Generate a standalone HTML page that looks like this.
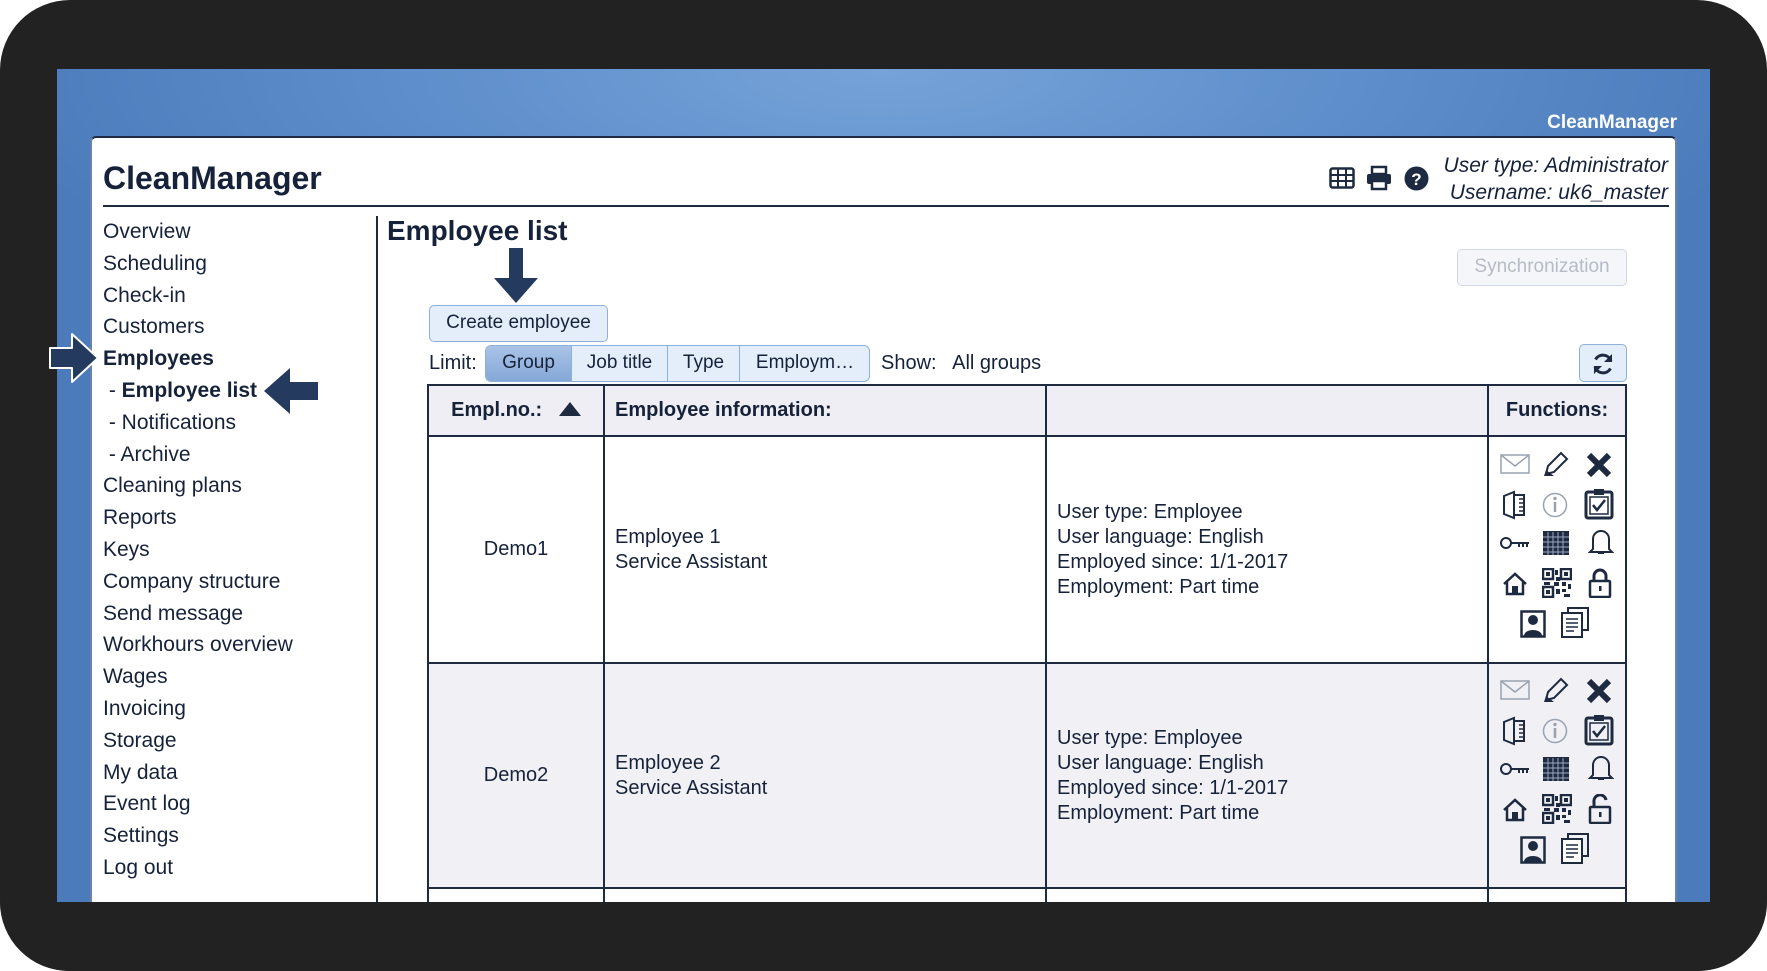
<!DOCTYPE html>
<html><head><meta charset="utf-8"><style>
*{margin:0;padding:0;box-sizing:border-box}
body{width:1767px;height:971px;overflow:hidden;background:#fff;font-family:"Liberation Sans",Arial,sans-serif;color:#16223a;position:relative}
.frame{position:absolute;left:0;top:0;width:1767px;height:971px;background:#222;border-radius:70px}
.blue{position:absolute;left:57px;top:69px;width:1653px;height:833px;background:radial-gradient(ellipse 900px 300px at 50% 0%,#76a3d8 0%,#5f8fcc 50%,#4b7bba 100%)}
.brand{position:absolute;right:90px;top:112px;color:#fff;font-weight:bold;font-size:19px}
.panel{position:absolute;left:90px;top:136px;width:1587px;height:766px;background:#fff;border-top:2px solid #1f2b44;border-left:2px solid #6b83a6;border-right:2px solid #6b83a6;border-radius:6px 6px 0 0}
.a{position:absolute;white-space:nowrap}
.nav{font-size:21px;left:103px}
.btn{position:absolute;border:1.5px solid #8fb0da;background:#e3eefa;border-radius:5px;font-size:19px;text-align:center}
table{position:absolute;left:427px;top:384px;width:1200px;border-collapse:collapse;font-size:20px}
td{border:2px solid #1e2a40;vertical-align:middle}
.fi svg{position:absolute}
</style></head><body>
<div class="frame"></div>
<div class="blue"></div>
<div class="brand">CleanManager</div>
<div class="panel"></div>
<div class="a" style="left:103px;top:160px;font-size:32px;font-weight:bold">CleanManager</div>
<div class="a" style="left:103px;top:205px;width:1566px;height:2px;background:#1e2a40"></div>
<!-- header icons -->
<svg class="a" style="left:1329px;top:167px" width="26" height="22" viewBox="0 0 26 22"><rect x="1.5" y="1.5" width="23" height="19" rx="2" fill="none" stroke="#1e2a40" stroke-width="2.5"/><path d="M1 8H25M1 14H25M9 2V20M17 2V20" stroke="#1e2a40" stroke-width="2"/></svg>
<svg class="a" style="left:1366px;top:165px" width="26" height="26" viewBox="0 0 26 26"><rect x="6" y="2" width="14" height="7" fill="none" stroke="#1e2a40" stroke-width="2.5"/><rect x="1" y="9" width="24" height="10" rx="2" fill="#1e2a40"/><rect x="6" y="16" width="14" height="8" fill="#fff" stroke="#1e2a40" stroke-width="2.5"/></svg>
<svg class="a" style="left:1404px;top:166px" width="25" height="25" viewBox="0 0 25 25"><circle cx="12.5" cy="12.5" r="12" fill="#1e2a40"/><text x="12.5" y="19" text-anchor="middle" font-family="Liberation Sans" font-weight="bold" font-size="17" fill="#fff">?</text></svg>
<div class="a" style="right:99px;top:152px;font-size:21px;font-style:italic;text-align:right;line-height:27px">User type: Administrator<br>Username: uk6_master</div>
<!-- sidebar -->
<div class="a" style="left:376px;top:216px;width:2px;height:686px;background:#1e2a40"></div>
<div class="a nav" style="top:216px;line-height:31.8px">Overview<br>Scheduling<br>Check-in<br>Customers<br><b>Employees</b><br>&nbsp;- <b>Employee list</b><br>&nbsp;- Notifications<br>&nbsp;- Archive<br>Cleaning plans<br>Reports<br>Keys<br>Company structure<br>Send message<br>Workhours overview<br>Wages<br>Invoicing<br>Storage<br>My data<br>Event log<br>Settings<br>Log out</div>
<svg class="a" style="left:48px;top:332px" width="54" height="52" viewBox="0 0 54 52"><path d="M2 16H24V2L50 26L24 50V36H2Z" fill="#243a5e" stroke="#fff" stroke-width="2" stroke-linejoin="round"/></svg>
<svg class="a" style="left:262px;top:366px" width="58" height="50" viewBox="0 0 58 50"><path d="M56 16H28V2L2 25L28 48V34H56Z" fill="#243a5e"/></svg>
<!-- main -->
<div class="a" style="left:387px;top:215px;font-size:28px;font-weight:bold">Employee list</div>
<svg class="a" style="left:493px;top:248px" width="46" height="56" viewBox="0 0 46 56"><path d="M16 0H30V30H45L23 55L1 30H16Z" fill="#243a5e"/></svg>
<div class="btn" style="left:429px;top:305px;width:179px;height:37px;line-height:33px">Create employee</div>
<div class="btn" style="left:1457px;top:249px;width:170px;height:37px;line-height:33px;color:#b6bcc6;background:#f4f6f9;border-color:#d0d8e4">Synchronization</div>
<div class="a" style="left:429px;top:352px;font-size:20px">Limit:</div>
<div class="a" style="left:485px;top:345px;width:385px;height:37px;border:1.5px solid #8fb0da;border-radius:6px;background:#e3eefa;overflow:hidden;font-size:19px">
<div class="a" style="left:0;top:0;width:85px;height:35px;background:linear-gradient(#a9c3e6,#86a8d8);text-align:center;line-height:34px">Group</div>
<div class="a" style="left:85px;top:0;width:96px;height:35px;border-left:1.5px solid #8fb0da;text-align:center;line-height:34px">Job title</div>
<div class="a" style="left:181px;top:0;width:72px;height:35px;border-left:1.5px solid #8fb0da;text-align:center;line-height:34px">Type</div>
<div class="a" style="left:253px;top:0;width:131px;height:35px;border-left:1.5px solid #8fb0da;text-align:center;line-height:34px">Employm…</div>
</div>
<div class="a" style="left:881px;top:352px;font-size:20px">Show:&nbsp;&nbsp; All groups</div>
<div class="btn" style="left:1579px;top:344px;width:48px;height:38px"><svg style="margin-top:7px" width="24" height="24" viewBox="0 0 24 24"><path d="M20 9A8.5 8.5 0 0 0 4.5 7.5M4 15A8.5 8.5 0 0 0 19.5 16.5" fill="none" stroke="#1e2a40" stroke-width="3"/><path d="M21 2V10H13Z M3 22V14H11Z" fill="#1e2a40"/></svg></div>
<table>
<tr style="height:51px;background:#eeeef4;font-weight:bold"><td style="width:176px;text-align:center">Empl.no.:&nbsp;&nbsp; <svg width="22" height="14" viewBox="0 0 22 14"><path d="M0 14L11 0L22 14Z" fill="#1e2a40"/></svg></td><td style="width:442px;padding-left:10px">Employee information:</td><td style="width:442px"></td><td style="text-align:center">Functions:</td></tr>
<tr style="height:227px"><td style="text-align:center">Demo1</td><td style="padding-left:10px;line-height:25px">Employee 1<br>Service Assistant</td><td style="padding-left:10px;line-height:25px">User type: Employee<br>User language: English<br>Employed since: 1/1-2017<br>Employment: Part time</td><td></td></tr>
<tr style="height:225px;background:#f0f0f5"><td style="text-align:center">Demo2</td><td style="padding-left:10px;line-height:25px">Employee 2<br>Service Assistant</td><td style="padding-left:10px;line-height:25px">User type: Employee<br>User language: English<br>Employed since: 1/1-2017<br>Employment: Part time</td><td></td></tr>
<tr style="height:40px"><td></td><td></td><td></td><td></td></tr>
</table>
<div class="a" style="left:0;top:902px;width:1767px;height:69px;background:#222;border-radius:0 0 70px 70px"></div>
<!-- function icons -->
<div class="a fi" style="left:1500px;top:450px">
<svg style="left:0;top:4px" width="30" height="20" viewBox="0 0 30 20"><rect x="1" y="1" width="28" height="18" fill="none" stroke="#9aa2b0" stroke-width="1.5"/><path d="M1 1L15 12L29 1" fill="none" stroke="#9aa2b0" stroke-width="1.5"/></svg>
<svg style="left:42px;top:0" width="28" height="28" viewBox="0 0 28 28"><path d="M4 24L6 16L19 3L25 9L12 22Z" fill="none" stroke="#1e2a40" stroke-width="2"/><path d="M2 26H12L4 20Z" fill="#1e2a40"/></svg>
<svg style="left:86px;top:2px" width="26" height="26" viewBox="0 0 26 26"><path d="M3 3L23 23M23 3L3 23" stroke="#1e2a40" stroke-width="6"/></svg>
<svg style="left:2px;top:40px" width="26" height="30" viewBox="0 0 26 30"><path d="M2 6L12 2V28L2 24Z M12 5H22V25H12" fill="none" stroke="#1e2a40" stroke-width="2"/><path d="M17 9H21M17 13H21M17 17H21M17 21H21" stroke="#1e2a40" stroke-width="1.5"/></svg>
<svg style="left:42px;top:42px" width="26" height="26" viewBox="0 0 26 26"><circle cx="13" cy="13" r="11.5" fill="none" stroke="#9aa2b0" stroke-width="1.5"/><path d="M13 10V20" stroke="#9aa2b0" stroke-width="2.5"/><circle cx="13" cy="6.5" r="1.7" fill="#9aa2b0"/></svg>
<svg style="left:84px;top:38px" width="30" height="32" viewBox="0 0 30 32"><rect x="2" y="4" width="26" height="26" rx="2" fill="none" stroke="#1e2a40" stroke-width="3"/><rect x="6" y="9" width="18" height="17" fill="none" stroke="#1e2a40" stroke-width="1.5"/><rect x="10" y="1" width="10" height="6" fill="#1e2a40"/><path d="M9 17L13 22L21 12" fill="none" stroke="#1e2a40" stroke-width="2.5"/></svg>
<svg style="left:0;top:86px" width="30" height="14" viewBox="0 0 30 14"><circle cx="6" cy="7" r="5" fill="none" stroke="#1e2a40" stroke-width="2"/><path d="M11 7H29M19 7V11M23 7V11M27 7V11" stroke="#1e2a40" stroke-width="2"/></svg>
<svg style="left:42px;top:80px" width="28" height="26" viewBox="0 0 28 26"><rect x="1" y="1" width="26" height="24" fill="#1e2a40"/><path d="M1 7H27M1 12H27M1 17H27M1 22H27M6 2V25M11 2V25M16 2V25M21 2V25" stroke="#9aa8c0" stroke-width="1"/></svg>
<svg style="left:88px;top:78px" width="26" height="28" viewBox="0 0 26 28"><path d="M5 21V11A8 8 0 0 1 21 11V21L24 24H2Z" fill="none" stroke="#1e2a40" stroke-width="2"/><path d="M10 25H16" stroke="#1e2a40" stroke-width="2"/></svg>
<svg style="left:2px;top:122px" width="26" height="24" viewBox="0 0 26 24"><path d="M2 12L13 2L24 12M5 10V22H21V10" fill="none" stroke="#1e2a40" stroke-width="2.5"/><rect x="10" y="14" width="6" height="8" fill="#1e2a40"/></svg>
<svg style="left:42px;top:118px" width="30" height="30" viewBox="0 0 30 30" fill="#1e2a40"><path d="M1 1H11V11H1ZM19 1H29V11H19ZM1 19H11V29H1Z" fill="none" stroke="#1e2a40" stroke-width="2.5"/><rect x="4" y="4" width="4" height="4"/><rect x="22" y="4" width="4" height="4"/><rect x="4" y="22" width="4" height="4"/><rect x="13" y="2" width="3" height="5"/><rect x="14" y="9" width="4" height="4"/><rect x="2" y="14" width="6" height="3"/><rect x="12" y="14" width="5" height="4"/><rect x="20" y="14" width="4" height="4"/><rect x="26" y="16" width="3" height="5"/><rect x="14" y="21" width="4" height="5"/><rect x="20" y="21" width="4" height="3"/><rect x="22" y="26" width="6" height="3"/></svg>
<svg style="left:88px;top:118px" width="24" height="30" viewBox="0 0 24 30"><path d="M6 13V8A6 6 0 0 1 18 8V13" fill="none" stroke="#1e2a40" stroke-width="3"/><rect x="2" y="13" width="20" height="16" rx="1" fill="none" stroke="#1e2a40" stroke-width="2.5"/><rect x="11" y="18" width="2.5" height="5" fill="#1e2a40"/></svg>
<svg style="left:20px;top:160px" width="26" height="28" viewBox="0 0 26 28"><rect x="1.5" y="1.5" width="23" height="25" fill="none" stroke="#1e2a40" stroke-width="2.5"/><circle cx="13" cy="10" r="5" fill="#1e2a40"/><path d="M4 26C4 18 22 18 22 26Z" fill="#1e2a40"/></svg>
<svg style="left:60px;top:156px" width="30" height="32" viewBox="0 0 30 32"><path d="M8 6V2H28V24H22" fill="none" stroke="#1e2a40" stroke-width="2"/><rect x="2" y="7" width="20" height="24" fill="#fff" stroke="#1e2a40" stroke-width="2"/><path d="M6 13H18M6 17H18M6 21H18M6 25H14" stroke="#1e2a40" stroke-width="1.6"/></svg>
</div>
<div class="a fi" style="left:1500px;top:676px">
<svg style="left:0;top:4px" width="30" height="20" viewBox="0 0 30 20"><rect x="1" y="1" width="28" height="18" fill="none" stroke="#9aa2b0" stroke-width="1.5"/><path d="M1 1L15 12L29 1" fill="none" stroke="#9aa2b0" stroke-width="1.5"/></svg>
<svg style="left:42px;top:0" width="28" height="28" viewBox="0 0 28 28"><path d="M4 24L6 16L19 3L25 9L12 22Z" fill="none" stroke="#1e2a40" stroke-width="2"/><path d="M2 26H12L4 20Z" fill="#1e2a40"/></svg>
<svg style="left:86px;top:2px" width="26" height="26" viewBox="0 0 26 26"><path d="M3 3L23 23M23 3L3 23" stroke="#1e2a40" stroke-width="6"/></svg>
<svg style="left:2px;top:40px" width="26" height="30" viewBox="0 0 26 30"><path d="M2 6L12 2V28L2 24Z M12 5H22V25H12" fill="none" stroke="#1e2a40" stroke-width="2"/><path d="M17 9H21M17 13H21M17 17H21M17 21H21" stroke="#1e2a40" stroke-width="1.5"/></svg>
<svg style="left:42px;top:42px" width="26" height="26" viewBox="0 0 26 26"><circle cx="13" cy="13" r="11.5" fill="none" stroke="#9aa2b0" stroke-width="1.5"/><path d="M13 10V20" stroke="#9aa2b0" stroke-width="2.5"/><circle cx="13" cy="6.5" r="1.7" fill="#9aa2b0"/></svg>
<svg style="left:84px;top:38px" width="30" height="32" viewBox="0 0 30 32"><rect x="2" y="4" width="26" height="26" rx="2" fill="none" stroke="#1e2a40" stroke-width="3"/><rect x="6" y="9" width="18" height="17" fill="none" stroke="#1e2a40" stroke-width="1.5"/><rect x="10" y="1" width="10" height="6" fill="#1e2a40"/><path d="M9 17L13 22L21 12" fill="none" stroke="#1e2a40" stroke-width="2.5"/></svg>
<svg style="left:0;top:86px" width="30" height="14" viewBox="0 0 30 14"><circle cx="6" cy="7" r="5" fill="none" stroke="#1e2a40" stroke-width="2"/><path d="M11 7H29M19 7V11M23 7V11M27 7V11" stroke="#1e2a40" stroke-width="2"/></svg>
<svg style="left:42px;top:80px" width="28" height="26" viewBox="0 0 28 26"><rect x="1" y="1" width="26" height="24" fill="#1e2a40"/><path d="M1 7H27M1 12H27M1 17H27M1 22H27M6 2V25M11 2V25M16 2V25M21 2V25" stroke="#9aa8c0" stroke-width="1"/></svg>
<svg style="left:88px;top:78px" width="26" height="28" viewBox="0 0 26 28"><path d="M5 21V11A8 8 0 0 1 21 11V21L24 24H2Z" fill="none" stroke="#1e2a40" stroke-width="2"/><path d="M10 25H16" stroke="#1e2a40" stroke-width="2"/></svg>
<svg style="left:2px;top:122px" width="26" height="24" viewBox="0 0 26 24"><path d="M2 12L13 2L24 12M5 10V22H21V10" fill="none" stroke="#1e2a40" stroke-width="2.5"/><rect x="10" y="14" width="6" height="8" fill="#1e2a40"/></svg>
<svg style="left:42px;top:118px" width="30" height="30" viewBox="0 0 30 30" fill="#1e2a40"><path d="M1 1H11V11H1ZM19 1H29V11H19ZM1 19H11V29H1Z" fill="none" stroke="#1e2a40" stroke-width="2.5"/><rect x="4" y="4" width="4" height="4"/><rect x="22" y="4" width="4" height="4"/><rect x="4" y="22" width="4" height="4"/><rect x="13" y="2" width="3" height="5"/><rect x="14" y="9" width="4" height="4"/><rect x="2" y="14" width="6" height="3"/><rect x="12" y="14" width="5" height="4"/><rect x="20" y="14" width="4" height="4"/><rect x="26" y="16" width="3" height="5"/><rect x="14" y="21" width="4" height="5"/><rect x="20" y="21" width="4" height="3"/><rect x="22" y="26" width="6" height="3"/></svg>
<svg style="left:88px;top:118px" width="24" height="30" viewBox="0 0 24 30"><path d="M6 13V8A6 6 0 0 1 18 6" fill="none" stroke="#1e2a40" stroke-width="3"/><rect x="2" y="13" width="20" height="16" rx="1" fill="none" stroke="#1e2a40" stroke-width="2.5"/><rect x="11" y="18" width="2.5" height="5" fill="#1e2a40"/></svg>
<svg style="left:20px;top:160px" width="26" height="28" viewBox="0 0 26 28"><rect x="1.5" y="1.5" width="23" height="25" fill="none" stroke="#1e2a40" stroke-width="2.5"/><circle cx="13" cy="10" r="5" fill="#1e2a40"/><path d="M4 26C4 18 22 18 22 26Z" fill="#1e2a40"/></svg>
<svg style="left:60px;top:156px" width="30" height="32" viewBox="0 0 30 32"><path d="M8 6V2H28V24H22" fill="none" stroke="#1e2a40" stroke-width="2"/><rect x="2" y="7" width="20" height="24" fill="#fff" stroke="#1e2a40" stroke-width="2"/><path d="M6 13H18M6 17H18M6 21H18M6 25H14" stroke="#1e2a40" stroke-width="1.6"/></svg>
</div>
</body></html>
